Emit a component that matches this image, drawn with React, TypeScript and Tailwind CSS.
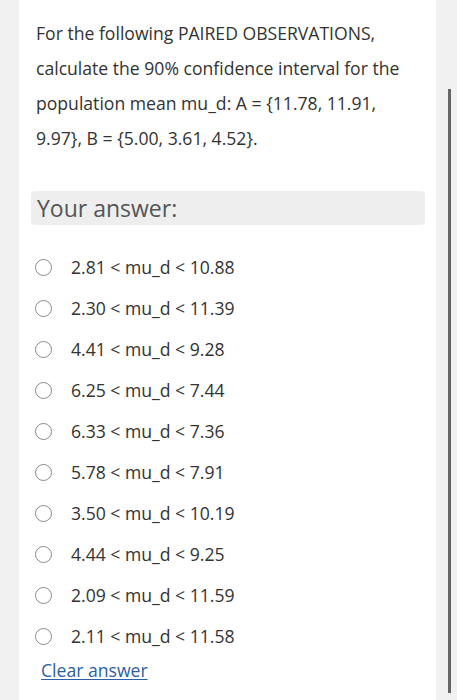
const options = [
  "2.81 < mu_d < 10.88",
  "2.30 < mu_d < 11.39",
  "4.41 < mu_d < 9.28",
  "6.25 < mu_d < 7.44",
  "6.33 < mu_d < 7.36",
  "5.78 < mu_d < 7.91",
  "3.50 < mu_d < 10.19",
  "4.44 < mu_d < 9.25",
  "2.09 < mu_d < 11.59",
  "2.11 < mu_d < 11.58",
]

export default function App() {
  return (
    <div
      className="flex h-[700px] w-[457px] overflow-hidden bg-[#f1f1f1] text-[#333]"
      style={{ fontFamily: '"Open Sans", sans-serif' }}
    >
      <div className="w-[19px] shrink-0" />
      <div className="w-[417px] shrink-0 bg-white pl-[17px] pr-[11px] pt-[16px]">
        <p className="pr-[6px] text-[17.6px] leading-[35px]">
          For the following PAIRED OBSERVATIONS, calculate the 90% confidence interval for the population mean mu_d: A = {"{"}11.78, 11.91, 9.97{"}"}, B = {"{"}5.00, 3.61, 4.52{"}"}.
        </p>
        <div className="mt-[35px] ml-[-5px] flex h-[34px] items-center rounded-[4px] bg-[#eeeeee] pl-[6px] text-[23px] text-[#555]">
          Your answer:
        </div>
        <div className="mt-[22px] flex flex-col">
          {options.map((o) => (
            <label key={o} className="flex h-[41px] items-center">
              <span className="ml-[-1px] h-[17px] w-[17px] rounded-full border-[1.5px] border-[#8a8a8a]" />
              <span className="ml-[19px] text-[17.6px]">{o}</span>
            </label>
          ))}
        </div>
        <a href="#" className="mt-[1px] ml-[5px] block text-[17.6px] leading-[24px] text-[#2d5ea8] underline underline-offset-2">
          Clear answer
        </a>
      </div>
      <div className="flex w-[21px] shrink-0 justify-center">
        <div className="mt-[89px] ml-[6px] h-[604px] w-[3px] bg-[#666]" />
      </div>
    </div>
  )
}
